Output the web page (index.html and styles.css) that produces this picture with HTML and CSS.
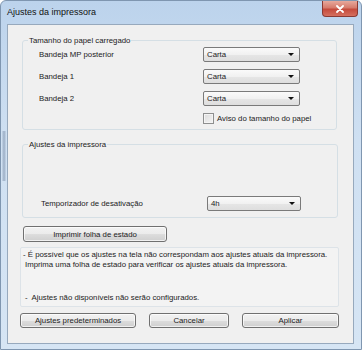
FILE: index.html
```html
<!DOCTYPE html>
<html lang="pt">
<head>
  <meta charset="UTF-8">
  <title>Ajustes da impressora</title>
  <link rel="stylesheet" href="styles.css">
</head>
<body>
  <div class="window">
    <div class="titlebar">
      <span class="title">Ajustes da impressora</span>
      <div class="close">
        <svg viewBox="0 0 10 8" width="10" height="8">
          <path d="M2 1 L8 7 M8 1 L2 7" stroke="#fff" stroke-width="1.8" stroke-linecap="round" />
        </svg>
      </div>
    </div>

    <div class="client">
      <div class="group group-paper">
        <span class="group-title">Tamanho do papel carregado</span>
        <div class="row">
          <span class="label">Bandeja MP posterior</span>
          <div class="combo"><span>Carta</span><i class="arrow"></i></div>
        </div>
        <div class="row">
          <span class="label">Bandeja 1</span>
          <div class="combo"><span>Carta</span><i class="arrow"></i></div>
        </div>
        <div class="row">
          <span class="label">Bandeja 2</span>
          <div class="combo"><span>Carta</span><i class="arrow"></i></div>
        </div>
        <div class="row row-check">
          <span></span>
          <label class="check"><span class="box"></span>Aviso do tamanho do papel</label>
        </div>
      </div>

      <div class="group group-printer">
        <span class="group-title">Ajustes da impressora</span>
        <div class="row row-timer">
          <span class="label">Temporizador de desativação</span>
          <div class="combo"><span>4h</span><i class="arrow"></i></div>
        </div>
      </div>

      <button class="btn btn-status">Imprimir folha de estado</button>

      <div class="notes">
        <p>- É possível que os ajustes na tela não correspondam aos ajustes atuais da impressora.</p>
        <p class="indent">Imprima uma folha de estado para verificar os ajustes atuais da impressora.</p>
        <p class="notes-last">-&nbsp; Ajustes não disponíveis não serão configurados.</p>
      </div>

      <div class="actions">
        <button class="btn btn-default">Ajustes predeterminados</button>
        <button class="btn btn-cancel">Cancelar</button>
        <button class="btn btn-apply">Aplicar</button>
      </div>
    </div>
  </div>
</body>
</html>
```

FILE: styles.css
```css
:root {
  --frame: #c3d8ee;
  --frame-edge: #7f96b0;
  --client-bg: #f0f0f0;
  --group-border: #d5dfe5;
  --control-border: #7a7a7a;
  --text: #1b1b1b;
}

* {
  margin: 0;
  padding: 0;
  box-sizing: border-box;
}

body {
  font-family: 'Liberation Sans', Arial, sans-serif;
  font-size: 7.8px;
  color: var(--text);
  background: #fff;
}

.window {
  width: 362px;
  height: 350px;
  border: 1px solid var(--frame-edge);
  border-radius: 6px 6px 0 0;
  background:
    linear-gradient(90deg, transparent 1px, rgba(90, 110, 140, 0.35) 2px, rgba(90, 110, 140, 0.35) 4px, transparent 5px) 0 130px / 6px 50px no-repeat,
    linear-gradient(180deg, #bcd3ec 0%, #cfe0f2 40%, #d6e5f4 100%);
  padding: 0 6px 0 6px;
  display: flex;
  flex-direction: column;
}

.titlebar {
  height: 23px;
  display: flex;
  justify-content: space-between;
  align-items: flex-start;
}

.title {
  font-size: 9px;
  line-height: 22px;
  color: #111;
}

.close {
  width: 36px;
  height: 16px;
  margin-right: -3px;
  border: 1px solid #8a3a33;
  border-top: none;
  border-radius: 0 0 4px 4px;
  background: linear-gradient(180deg, #e7a99c 0%, #d67b6c 45%, #c54b3c 55%, #d5705f 100%);
  display: flex;
  align-items: center;
  justify-content: center;
}

.client {
  width: 347px;
  height: 320px;
  border: 1px solid #97a9bd;
  background: var(--client-bg);
  padding-top: 15px;
}

.group {
  position: relative;
  border: 1px solid var(--group-border);
  border-radius: 3px;
  margin-left: 14px;
}

.group-title {
  position: absolute;
  top: -6px;
  left: 5px;
  padding: 0 1px;
  line-height: 11px;
  background: var(--client-bg);
}

.group-paper {
  width: 315px;
  height: 90px;
  padding: 6px 0 0 16px;
}

.group-printer {
  width: 316px;
  height: 74px;
  margin-top: 14px;
  padding: 51px 0 0 18px;
}

.row {
  display: grid;
  grid-template-columns: 164px 97px;
  align-items: center;
  height: 15px;
  margin-bottom: 7px;
}

.row-check {
  margin-top: -1px;
  height: 12px;
  grid-template-columns: 164px 130px;
}

.row-timer {
  grid-template-columns: 166px 94px;
}

.combo {
  height: 15px;
  border: 1px solid var(--control-border);
  border-radius: 2px;
  background: linear-gradient(180deg, #fafafa 0%, #f1f1f1 50%, #e6e6e6 51%, #dedede 100%);
  display: flex;
  align-items: center;
  justify-content: space-between;
  padding: 0 5px 0 3px;
}

.arrow {
  width: 0;
  height: 0;
  border-left: 3px solid transparent;
  border-right: 3px solid transparent;
  border-top: 3px solid #111;
}

.check {
  display: flex;
  align-items: center;
  gap: 3px;
  white-space: nowrap;
}

.box {
  width: 11px;
  height: 11px;
  flex: none;
  border: 1px solid #8e8f8f;
  background: linear-gradient(135deg, #dcdcdc 0%, #f4f4f4 100%);
  box-shadow: inset 0 0 0 1px #f4f4f4;
}

.btn {
  font-family: inherit;
  font-size: 7.8px;
  color: var(--text);
  height: 16px;
  border: 1px solid #707070;
  border-radius: 3px;
  background: linear-gradient(180deg, #f2f2f2 0%, #ebebeb 50%, #dddddd 51%, #cfcfcf 100%);
  box-shadow: inset 0 0 0 1px rgba(255, 255, 255, 0.7);
}

.btn-status {
  display: block;
  width: 144px;
  margin: 8px 0 0 15px;
}

.notes {
  width: 319px;
  height: 60px;
  margin: 5px 0 0 12px;
  border: 1px solid #dde3e8;
  border-radius: 2px;
  background: #f3f3f3;
  padding: 2px 0 0 2px;
  line-height: 10px;
}

.indent {
  padding-left: 2px;
}

.notes-last {
  margin-top: 23px;
  padding-left: 2px;
}

.actions {
  display: flex;
  column-gap: 13px;
  margin: 6px 0 0 12px;
}

.actions .btn {
  height: 15px;
}

.btn-default {
  width: 116px;
}

.btn-cancel {
  width: 80px;
}

.btn-apply {
  width: 97px;
}
```
